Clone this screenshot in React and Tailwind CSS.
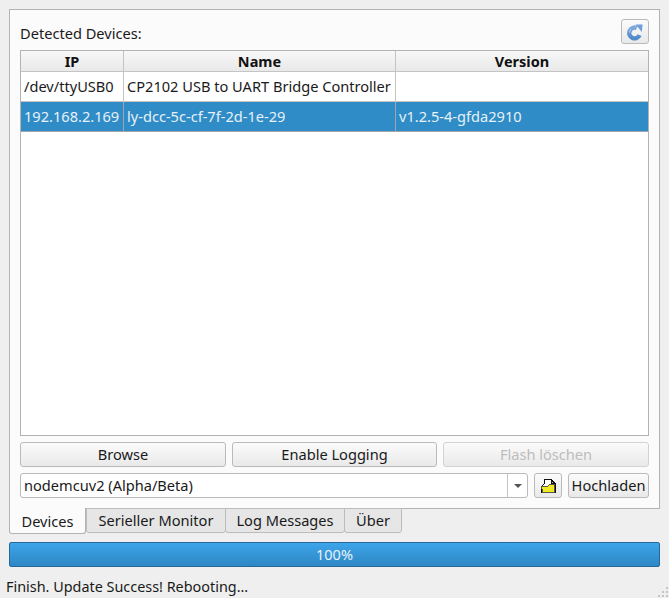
const btn =
  'flex items-center justify-center rounded-[3px] border border-[#bababa] bg-gradient-to-b from-[#fbfbfb] to-[#e9e9e9] text-[14.6px] text-[#1a1a1a]';

const RefreshIcon = () => (
  <svg width="18" height="18" viewBox="0 0 18 18">
    <defs>
      <linearGradient id="refresh" x1="0" y1="0" x2="0" y2="1">
        <stop offset="0" stopColor="#7fa9dc" />
        <stop offset="1" stopColor="#4f8ac9" />
      </linearGradient>
    </defs>
    <path d="M13.6 12.2A5.4 5.4 0 1 1 10.8 5" fill="none" stroke="url(#refresh)" strokeWidth="4.4" />
    <path d="M9.6 1.6 L16.6 1.4 L15.8 9 Z" fill="#6f9fd8" />
    <path d="M5 6.2A4.6 4.6 0 0 0 3.6 9.5" fill="none" stroke="#c3d8f0" strokeWidth="1" />
  </svg>
);

const OpenIcon = () => (
  <svg width="16" height="16" viewBox="0 0 16 16" shapeRendering="crispEdges">
    <defs>
      <pattern id="dither" width="2" height="2" patternUnits="userSpaceOnUse">
        <rect width="2" height="2" fill="#f7f200" />
        <rect width="1" height="1" fill="#d8d68a" />
      </pattern>
    </defs>
    <path d="M4 1.5H11L15 5.5V14.5H2L1 9L4 6Z" fill="#fff" stroke="#111" strokeWidth="1" />
    <path d="M11 1.5V5.5H15Z" fill="#b9b0a8" stroke="#111" strokeWidth="1" />
    <path d="M1.5 8H8L10 6.5H14.5V14H2.5Z" fill="url(#dither)" stroke="#555" strokeWidth="1" />
  </svg>
);

const SizeGrip = () => (
  <svg width="12" height="11" viewBox="0 0 12 11" className="shrink-0 self-end" fill="#c4c4c4">
    <rect x="9" y="0" width="2" height="2" />
    <rect x="5" y="4" width="2" height="2" />
    <rect x="9" y="4" width="2" height="2" />
    <rect x="1" y="8" width="2" height="2" />
    <rect x="5" y="8" width="2" height="2" />
    <rect x="9" y="8" width="2" height="2" />
  </svg>
);

const HeaderCell = ({ className, children }) => (
  <div
    className={`flex items-center justify-center border-r border-[#c4c4c4] pt-px font-bold text-[14.5px] text-[#111] ${className}`}
  >
    {children}
  </div>
);

const Row = ({ selected, cells }) => {
  const tone = selected
    ? 'bg-[#308cc6] text-[#e6f1f8] border-[#9fa6ab]'
    : 'bg-white text-[#1a1a1a] border-[#c4c4c4]';
  return (
    <div className={`flex h-[30px] border-b text-[14.6px] ${tone}`}>
      <div className={`w-[103px] shrink-0 border-r pl-[3px] leading-[29px] whitespace-nowrap ${tone}`}>
        {cells[0]}
      </div>
      <div className={`w-[272px] shrink-0 border-r pl-[3px] leading-[29px] whitespace-nowrap ${tone}`}>
        {cells[1]}
      </div>
      <div className="flex-1 pl-[3px] leading-[29px] whitespace-nowrap">{cells[2]}</div>
    </div>
  );
};

const tabs = [
  { label: 'Serieller Monitor', width: 'w-[140px]' },
  { label: 'Log Messages', width: 'w-[120px] -ml-px' },
  { label: 'Über', width: 'w-[58px] -ml-px' },
];

export default function App() {
  return (
    <div
      className="flex h-[598px] w-[669px] flex-col overflow-hidden bg-[#efefef] text-[14.6px] text-[#1a1a1a]"
      style={{ fontFamily: '"Noto Sans", sans-serif' }}
    >
      <div className="mx-[9px] mt-[9px] flex h-[500px] flex-col border border-[#b3b3b3] bg-[#fbfbfb] pl-[10px] pr-[10px]">
        <div className="flex h-[40px] shrink-0 items-start justify-between pt-[9px]">
          <span className="pt-[2px] leading-[24px]">Detected Devices:</span>
          <button className={`${btn} h-[25px] w-[28px]`}>
            <RefreshIcon />
          </button>
        </div>

        <div className="flex min-h-0 flex-1 flex-col border border-[#b3b3b3] bg-white">
          <div className="flex h-[21px] shrink-0 border-b border-[#c4c4c4] bg-gradient-to-b from-[#f8f8f8] to-[#e9e9e9]">
            <HeaderCell className="w-[103px]">IP</HeaderCell>
            <HeaderCell className="w-[272px]">Name</HeaderCell>
            <HeaderCell className="flex-1 border-r-0">Version</HeaderCell>
          </div>
          <Row cells={['/dev/ttyUSB0', 'CP2102 USB to UART Bridge Controller', '']} />
          <Row selected cells={['192.168.2.169', 'ly-dcc-5c-cf-7f-2d-1e-29', 'v1.2.5-4-gfda2910']} />
        </div>

        <div className="mt-[6px] flex h-[25px] shrink-0 gap-[6px]">
          <button className={`${btn} w-[206px]`}>Browse</button>
          <button className={`${btn} w-[205px]`}>Enable Logging</button>
          <button className={`${btn} flex-1 !border-[#d2d2d2] !text-[#bdbdbd]`}>Flash löschen</button>
        </div>

        <div className="mt-[6px] mb-[10px] flex h-[25px] shrink-0">
          <div className="flex w-[508px] rounded-[3px] border border-[#bababa] bg-white">
            <span className="flex-1 pl-[3px] leading-[23px]">nodemcuv2 (Alpha/Beta)</span>
            <div className="flex w-[20px] items-center justify-center border-l border-[#c4c4c4]">
              <div className="h-0 w-0 border-x-[4px] border-t-[4px] border-x-transparent border-t-[#555]" />
            </div>
          </div>
          <button className={`${btn} ml-[6px] w-[28px]`}>
            <OpenIcon />
          </button>
          <button className={`${btn} ml-[6px] flex-1`}>Hochladen</button>
        </div>
      </div>

      <div className="z-10 mx-[9px] -mt-px flex h-[26px] shrink-0 items-start">
        <div className="h-[26px] w-[77px] rounded-b-[3px] border border-t-0 border-[#b3b3b3] bg-[#fbfbfb] pt-[1px] text-center leading-[24px]">
          Devices
        </div>
        {tabs.map((tab) => (
          <div
            key={tab.label}
            className={`h-[25px] ${tab.width} rounded-b-[3px] border border-[#bcbcbc] bg-[#e6e6e6] text-center leading-[22px]`}
          >
            {tab.label}
          </div>
        ))}
      </div>

      <div className="mx-[9px] mt-[8px] flex h-[25px] shrink-0 items-center justify-center rounded-[2px] border border-[#27689a] bg-gradient-to-b from-[#3da5ea] to-[#2e87c4] pt-px text-[14.5px] text-[#e8f3fa]">
        100%
      </div>

      <div className="mt-[10px] flex flex-1 justify-between pl-[6px]">
        <span className="text-[14.4px] leading-[20px]">Finish. Update Success! Rebooting...</span>
        <SizeGrip />
      </div>
    </div>
  );
}
